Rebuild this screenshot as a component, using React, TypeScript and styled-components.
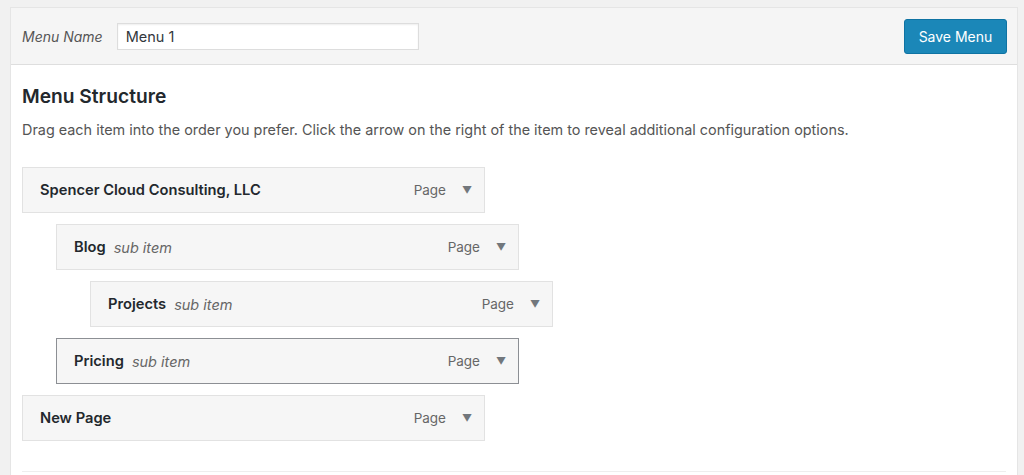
import React from 'react';
import styled, { createGlobalStyle } from 'styled-components';

const GlobalStyle = createGlobalStyle`
  html, body {
    margin: 0;
    padding: 0;
    background: #f1f1f1;
    font-family: Inter, "Noto Sans", "Liberation Sans", sans-serif;
    color: #444;
  }
`;

// Outer frame of the menu editor
const Panel = styled.div`
  margin: 7px 6px 0 10px;
  background: #fff;
  border: 1px solid #e5e5e5;
  border-bottom: none;
  height: 468px;
  box-sizing: border-box;
  display: flex;
  flex-direction: column;
`;

const Header = styled.div`
  background: #f5f5f5;
  border-bottom: 1px solid #dedede;
  height: 57px;
  box-sizing: border-box;
  display: flex;
  align-items: center;
  padding: 0 10px 0 11px;
  gap: 14px;
`;

const NameLabel = styled.label`
  font-style: italic;
  font-size: 14px;
  color: #555;
`;

const NameInput = styled.input`
  width: 302px;
  height: 27px;
  box-sizing: border-box;
  border: 1px solid #ddd;
  box-shadow: inset 0 1px 2px rgba(0, 0, 0, 0.07);
  font-family: inherit;
  font-size: 14.5px;
  color: #32373c;
  padding: 0 8px;
  outline: none;
`;

const SaveButton = styled.button`
  margin-left: auto;
  height: 35px;
  width: 103px;
  background: #1b87b8;
  border: 1px solid #0f73a3;
  border-radius: 3px;
  color: #fff;
  font-family: inherit;
  font-size: 14px;
  cursor: pointer;
`;

const Body = styled.div`
  padding: 19px 11px 0;
  flex: 1;
  display: flex;
  flex-direction: column;
`;

const Title = styled.h2`
  margin: 0;
  font-size: 19.2px;
  font-weight: 600;
  color: #23282d;
  line-height: 24px;
`;

const Description = styled.p`
  margin: 12px 0 0;
  font-size: 14.4px;
  line-height: 20px;
  color: #555;
`;

const ItemList = styled.ul`
  list-style: none;
  margin: 27px 0 0;
  padding: 0;
  display: flex;
  flex-direction: column;
  gap: 11px;
`;

const Item = styled.li<{ $depth: number; $active?: boolean }>`
  margin-left: ${(p) => p.$depth * 34}px;
  width: 463px;
  height: 46px;
  box-sizing: border-box;
  background: #f6f6f6;
  border: 1px solid ${(p) => (p.$active ? '#8c8f94' : '#e2e2e2')};
  display: flex;
  align-items: center;
  padding: 0 10px 0 17px;
`;

const ItemTitle = styled.span`
  font-weight: 600;
  font-size: 14.7px;
  color: #23282d;
`;

const SubLabel = styled.span`
  font-style: italic;
  font-size: 14.5px;
  color: #666;
  margin-left: 8px;
`;

const ItemType = styled.span`
  margin-left: auto;
  font-size: 13.5px;
  color: #666;
`;

const Arrow = styled.span`
  margin-left: 14px;
  font-size: 10px;
  color: #72777c;
  width: 14px;
  text-align: center;
`;

const Footer = styled.div`
  margin-top: auto;
  border-top: 1px solid #eee;
  height: 3px;
`;

const items = [
  { title: 'Spencer Cloud Consulting, LLC', depth: 0 },
  { title: 'Blog', depth: 1, sub: true },
  { title: 'Projects', depth: 2, sub: true },
  { title: 'Pricing', depth: 1, sub: true, active: true },
  { title: 'New Page', depth: 0 },
];

export default function App() {
  return (
    <>
      <GlobalStyle />
      <Panel>
        <Header>
          <NameLabel>Menu Name</NameLabel>
          <NameInput defaultValue="Menu 1" />
          <SaveButton>Save Menu</SaveButton>
        </Header>
        <Body>
          <Title>Menu Structure</Title>
          <Description>
            Drag each item into the order you prefer. Click the arrow on the right of the item to reveal additional configuration options.
          </Description>
          <ItemList>
            {items.map((it) => (
              <Item key={it.title} $depth={it.depth} $active={it.active}>
                <ItemTitle>{it.title}</ItemTitle>
                {it.sub && <SubLabel>sub item</SubLabel>}
                <ItemType>Page</ItemType>
                <Arrow>▼</Arrow>
              </Item>
            ))}
          </ItemList>
          <Footer />
        </Body>
      </Panel>
    </>
  );
}
